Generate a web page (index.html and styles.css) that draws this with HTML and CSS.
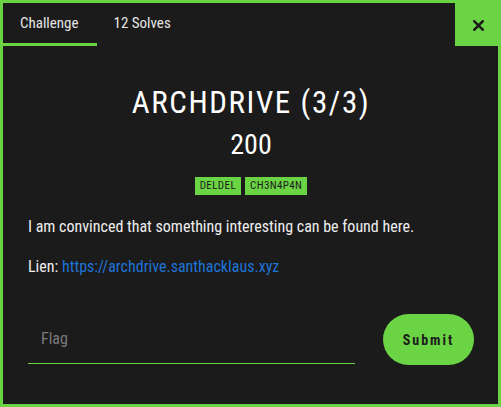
FILE: index.html
```html
<!DOCTYPE html>
<html>
<head>
<meta charset="utf-8">
<link rel="stylesheet" href="styles.css">
</head>
<body>
<div class="modal">
  <div class="tabs">
    <div class="tab active">Challenge</div>
    <div class="tab">12 Solves</div>
  </div>
  <button class="close" aria-label="Close">
    <svg width="11" height="11" viewBox="0 0 11 11"><path d="M1.3 1.3 L9.7 9.7 M9.7 1.3 L1.3 9.7" stroke="#1b1b1b" stroke-width="2.6" stroke-linecap="square"/></svg>
  </button>
  <div class="content">
    <h1 class="title">ARCHDRIVE (3/3)</h1>
    <div class="points">200</div>
    <div class="tags">
      <span class="tag">DELDEL</span>
      <span class="tag">CH3N4P4N</span>
    </div>
    <p class="desc">I am convinced that something interesting can be found here.</p>
    <p class="desc">Lien: <a href="#">https://archdrive.santhacklaus.xyz</a></p>
    <form class="submit-row">
      <input class="flag" type="text" placeholder="Flag">
      <button class="submit" type="button">Submit</button>
    </form>
  </div>
</div>
</body>
</html>
```

FILE: styles.css
```css
html, body {
  margin: 0;
  padding: 0;
  background: #1b1b1b;
}
.modal {
  position: relative;
  width: 501px;
  height: 407px;
  box-sizing: border-box;
  border: 3px solid #6ad445;
  background: #1b1b1b;
  color: #eeeeee;
  font-family: "Liberation Sans Narrow", "Roboto Condensed", Roboto, sans-serif;
}
.tabs {
  display: flex;
  height: 43px;
}
.tab {
  padding: 0 17px;
  font-size: 15px;
  line-height: 40px;
  color: #e6e6e6;
  box-sizing: border-box;
  height: 43px;
}
.tab.active {
  border-bottom: 3px solid #6ad445;
  padding-right: 18px;
}
.close {
  position: absolute;
  top: -3px;
  right: -3px;
  width: 46px;
  height: 46px;
  border: 0;
  padding: 4px 0 0;
  background: #6ad445;
  display: flex;
  align-items: center;
  justify-content: center;
}
.content {
  padding: 0 24px 0 25px;
  display: flex;
  flex-direction: column;
}
.title {
  margin: 39px 0 0;
  text-align: center;
  font-weight: normal;
  font-size: 31px;
  line-height: 36px;
  letter-spacing: 1.6px;
  color: #ffffff;
}
.points {
  text-align: center;
  font-size: 28px;
  line-height: 32px;
  margin-top: 8px;
  color: #ffffff;
}
.tags {
  display: flex;
  justify-content: center;
  gap: 4px;
  margin-top: 16px;
}
.tag {
  background: #6ad445;
  color: #1b1b1b;
  font-size: 11px;
  line-height: 18px;
  padding: 0 5px;
  letter-spacing: 0.4px;
}
.desc {
  margin: 22px 0 0;
  font-size: 16px;
  line-height: 20px;
}
.desc + .desc {
  margin-top: 20px;
}
.desc a {
  color: #1f74d8;
  text-decoration: none;
}
.submit-row {
  display: flex;
  align-items: center;
  gap: 28px;
  margin-top: 37px;
}
.flag {
  flex: 1;
  background: transparent;
  border: 0;
  border-bottom: 1px solid #6ad445;
  height: 48px;
  padding: 0 13px 2px;
  color: #eee;
  font-family: inherit;
  font-size: 16px;
  outline: none;
  box-sizing: border-box;
  align-self: flex-end;
  margin-bottom: 1px;
}
.flag::placeholder {
  color: #7a7a7a;
}
.submit {
  width: 91px;
  height: 51px;
  border: 0;
  border-radius: 26px;
  background: #6ad445;
  color: #1b1b1b;
  font-family: inherit;
  font-weight: bold;
  font-size: 14px;
  letter-spacing: 2px;
}
```
